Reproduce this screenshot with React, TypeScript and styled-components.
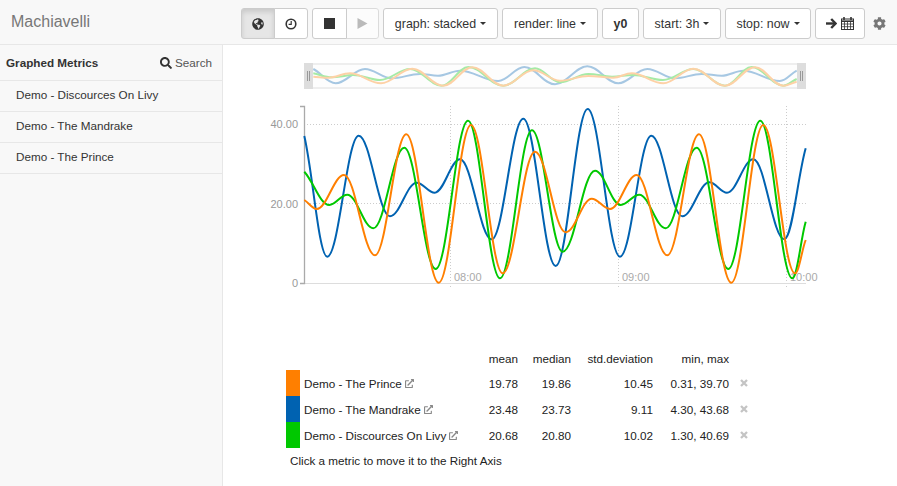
import React from "react";
import styled, { createGlobalStyle } from "styled-components";
import { FaGlobeAmericas, FaCog, FaSearch, FaExternalLinkAlt } from "react-icons/fa";

const Global = createGlobalStyle`
  html, body { margin: 0; padding: 0; background: #fff; }
  body { font-family: "Liberation Sans", Arial, sans-serif; color: #333; overflow: hidden; }
`;

const Page = styled.div`
  width: 897px;
  height: 486px;
  display: flex;
  flex-direction: column;
`;

const Navbar = styled.header`
  height: 45px;
  box-sizing: border-box;
  flex: none;
  background: #f8f8f8;
  border-bottom: 1px solid #e7e7e7;
  display: flex;
  align-items: center;
  padding: 3px 11px 0;
`;

const Brand = styled.div`
  font-size: 16px;
  color: #777;
  width: 230px;
  flex: none;
  margin-top: -3px;
`;

const Toolbar = styled.div`
  display: flex;
  align-items: center;
  gap: 4px;
`;

const Group = styled.div`
  display: flex;
`;

const Btn = styled.button<{ $w: number; $active?: boolean; $off?: boolean; $bold?: boolean }>`
  width: ${(p) => p.$w}px;
  height: 31px;
  padding: 0;
  margin: 0 0 0 -1px;
  &:first-child { margin-left: 0; border-top-left-radius: 3px; border-bottom-left-radius: 3px; }
  &:last-child { border-top-right-radius: 3px; border-bottom-right-radius: 3px; }
  box-sizing: border-box;
  border: 1px solid #ccc;
  border-radius: 0;
  background: ${(p) => (p.$active ? "#e6e6e6" : "#fff")};
  box-shadow: ${(p) => (p.$active ? "inset 0 3px 5px rgba(0,0,0,.125)" : "none")};
  color: #333;
  font-family: inherit;
  font-size: 12.4px;
  font-weight: ${(p) => (p.$bold ? 700 : 400)};
  opacity: ${(p) => (p.$off ? 0.65 : 1)};
  display: flex;
  align-items: center;
  justify-content: center;
  gap: 4px;
`;

const Caret = styled.span`
  width: 0;
  height: 0;
  border-top: 3.5px solid #333;
  border-left: 3.5px solid transparent;
  border-right: 3.5px solid transparent;
`;

const GearWrap = styled.span`
  display: flex;
  margin-left: 4px;
  color: #777;
  font-size: 13px;
`;

const Body = styled.div`
  flex: 1;
  display: flex;
  min-height: 0;
`;

const Sidebar = styled.aside`
  width: 223px;
  flex: none;
  box-sizing: border-box;
  background: #f8f8f8;
  border-right: 1px solid #e7e7e7;
  font-size: 11.7px;
`;

const SideHead = styled.div`
  height: 36px;
  box-sizing: border-box;
  padding: 0 10px 0 6px;
  display: flex;
  align-items: center;
  justify-content: space-between;
  border-bottom: 1px solid #e7e7e7;
`;

const SideTitle = styled.b`
  font-weight: 700;
`;

const SearchLink = styled.span`
  display: flex;
  align-items: center;
  gap: 3px;
  color: #555;
  svg { color: #333; font-size: 12px; }
`;

const SideRow = styled.div`
  height: 31px;
  box-sizing: border-box;
  padding: 0 0 4px 16px;
  display: flex;
  align-items: center;
  border-bottom: 1px solid #e7e7e7;
`;

const Main = styled.main`
  flex: 1;
  min-width: 0;
  display: flex;
  flex-direction: column;
  padding-left: 47px;
`;

const GraphSvg = styled.svg`
  display: block;
  width: 570px;
  height: 255px;
  margin-top: 10px;
  flex: none;
`;

const Legend = styled.table`
  border-collapse: collapse;
  margin: 36px 0 0 16px;
  font-size: 11.7px;
  color: #222;
  table-layout: fixed;
  width: 472px;
  th { font-weight: 400; text-align: right; height: 24px; padding: 0; }
  td { height: 26px; padding: 0; text-align: right; }
`;

const Swatch = styled.td<{ $c: string }>`
  && { width: 14px; background: ${(p) => p.$c}; }
`;

const NameCell = styled.td`
  && { text-align: left; padding-left: 4px; }
  svg { color: #888; font-size: 9px; margin-left: 3px; }
`;

const XCell = styled.td`
  && { text-align: center; }
  svg { vertical-align: 1px; }
`;

const Hint = styled.div`
  font-size: 11.7px;
  color: #222;
  margin: 6px 0 0 20px;
`;

type P = [number, number];
const ox = 270;
const oy = 55;

function smooth(pts: P[]): string {
  const q = pts.map(([x, y]) => [x - ox, y - oy] as P);
  let d = `M${q[0][0]} ${q[0][1]}`;
  for (let i = 1; i < q.length; i++) {
    const [a, b] = q[i - 1];
    const [c, e] = q[i];
    const k = (c - a) * 0.37;
    const sharpStart = i === 1;
    const sharpEnd = i === q.length - 1;
    const y1 = sharpStart ? b + (e - b) * 0.3 : b;
    const y2 = sharpEnd ? e - (e - b) * 0.3 : e;
    d += ` C${(a + k).toFixed(1)} ${y1.toFixed(1)} ${(c - k).toFixed(1)} ${y2.toFixed(1)} ${c} ${e}`;
  }
  return d;
}

const ORANGE = "#ff7f00";
const BLUE = "#0062b1";
const GREEN = "#00c800";

const blue: P[] = [[304.3,136],[327.3,256.7],[358.7,135.7],[390,216.3],[416.7,182.7],[434.7,192.7],[460,159.3],[491.7,239.3],[523.3,118.7],[555.7,266],[587.7,109],[620,256.7],[651.3,135.7],[682.3,216.3],[709.3,182.3],[727,192.7],[753.3,159.3],[784.3,239.3],[805.7,148.3]];
const green: P[] = [[304.3,171.7],[329.3,205],[347.3,194.7],[373.3,228.3],[404.3,147.7],[435.7,269],[468,120.7],[500,278.3],[532,130.3],[562.7,251.7],[595,170.7],[620.7,205],[639.3,194.7],[665.7,228.3],[696.7,147.7],[728.3,269],[760.3,120.7],[792.3,278.3],[805.7,221.7]];
const orange: P[] = [[304.3,200],[316.7,209],[344,175],[375,255.3],[406.3,134.3],[438.7,282.7],[471,125],[502.7,273.3],[535,151.7],[565.7,232.3],[591.7,198.7],[610,209],[636.7,175],[667.3,255.3],[699,134.3],[731.3,282.7],[763.3,125],[795,273.3],[805.7,240]];

const miniBlue: P[] = [[313.3,69],[335.7,83.3],[365,69],[391.7,78.3],[420,74],[438,75.7],[460,70.7],[498.3,81],[524.3,67],[555,84.3],[587.3,66.3],[618.3,83.3],[647.3,69],[675,78.3],[701.7,74],[721.7,75.7],[743.3,70.7],[780,81],[796.7,70.7]];
const miniGreen: P[] = [[313.3,73.3],[331.7,77.3],[353.3,75],[380,80],[410,69],[441.7,85.7],[468.3,67],[503.3,85.7],[535,68.3],[560,82.3],[588.3,74],[612,76.7],[633,75],[663,80],[693.3,69],[725,85.7],[751.7,67],[783.3,85.7],[796.7,79]];
const miniOrange: P[] = [[313.3,76.7],[328.3,77.7],[350,73.3],[381,83.3],[412.3,68.7],[443.3,85.7],[472.3,67.3],[503.3,85.7],[533.3,70.3],[560,80.7],[588.3,76],[613.3,77.7],[631.7,73.3],[663.3,83.3],[693.3,68.7],[725,85.7],[755,67.3],[783.3,85.7],[796.7,81.7]];

const rows = [
  { name: "Demo - The Prince", c: ORANGE, v: ["19.78", "19.86", "10.45", "0.31, 39.70"] },
  { name: "Demo - The Mandrake", c: BLUE, v: ["23.48", "23.73", "9.11", "4.30, 43.68"] },
  { name: "Demo - Discources On Livy", c: GREEN, v: ["20.68", "20.80", "10.02", "1.30, 40.69"] },
];

const X = (x: number) => x - ox;
const Y = (y: number) => y - oy;

function ClockIcon() {
  return (
    <svg width="12" height="12" viewBox="0 0 12 12" fill="none" stroke="#333">
      <circle cx="6" cy="6" r="4.8" strokeWidth="1.6" />
      <path d="M6.2 3V6.3H3.6" strokeWidth="1.2" />
    </svg>
  );
}

function ArrowIcon() {
  return (
    <svg width="11" height="11" viewBox="0 0 11 11" fill="none" stroke="#333">
      <path d="M0 5.5H9" strokeWidth="2.4" />
      <path d="M5.2 1L9.6 5.5L5.2 10" strokeWidth="2.4" />
    </svg>
  );
}

function CalendarIcon() {
  return (
    <svg width="13" height="13" viewBox="0 0 13 13" fill="none" stroke="#333">
      <rect x="0.5" y="2" width="12" height="10.5" strokeWidth="1" />
      <path d="M0.5 4.2H12.5" strokeWidth="1.6" />
      <path d="M0.5 7H12.5M0.5 9.7H12.5M3.5 4.5V12.5M6.5 4.5V12.5M9.5 4.5V12.5" strokeWidth="0.8" />
      <path d="M3 0V3M10 0V3" strokeWidth="1.6" />
    </svg>
  );
}

function RemoveIcon() {
  return (
    <svg width="8" height="8" viewBox="0 0 8 8" fill="none" stroke="#c4c4c4">
      <path d="M1 1L7 7M7 1L1 7" strokeWidth="2.3" />
    </svg>
  );
}

function Graph() {
  const grid = { stroke: "#ccc", strokeDasharray: "1 2", strokeWidth: 1 };
  const label = { fontSize: 11, fill: "#999", fontFamily: "'Liberation Sans', Arial, sans-serif" };
  return (
    <GraphSvg viewBox="0 0 570 255">
      <defs>
        <filter id="soft" x="-2%" y="-10%" width="104%" height="120%">
          <feGaussianBlur stdDeviation="0.4" />
        </filter>
      </defs>
      {/* overview */}
      <rect x={X(305)} y={Y(64)} width={500} height={24} fill="#fdfdfd" />
      <rect x={X(305)} y={Y(63)} width={500} height={2} fill="#eee" />
      <rect x={X(305)} y={Y(87)} width={500} height={2} fill="#eee" />
      <g fill="none" strokeWidth={2} opacity={0.34} filter="url(#soft)">
        <path d={smooth(miniBlue)} stroke={BLUE} />
        <path d={smooth(miniGreen)} stroke={GREEN} />
        <path d={smooth(miniOrange)} stroke={ORANGE} />
      </g>
      <rect x={X(304)} y={Y(63)} width={9} height={26} fill="#ddd" />
      <rect x={X(797)} y={Y(63)} width={9} height={26} fill="#ddd" />
      <path d={`M${X(307.5)} ${Y(71)}V${Y(81)}M${X(309.5)} ${Y(71)}V${Y(81)}M${X(800.5)} ${Y(71)}V${Y(81)}M${X(802.5)} ${Y(71)}V${Y(81)}`} stroke="#999" strokeWidth={1} />

      {/* grid */}
      <path d={`M${X(304)} ${Y(124.5)}H${X(806)}M${X(304)} ${Y(203.5)}H${X(806)}`} fill="none" {...grid} />
      <path d={`M${X(450.5)} ${Y(106)}V${Y(288)}M${X(618.5)} ${Y(106)}V${Y(288)}M${X(786.5)} ${Y(106)}V${Y(288)}`} fill="none" {...grid} />

      {/* axes */}
      <path d={`M${X(304)} ${Y(283.5)}H${X(806)}`} fill="none" stroke="#ddd" strokeWidth={1} />
      <path d={`M${X(300)} ${Y(106.5)}H${X(304.5)}V${Y(283.5)}H${X(300)}`} fill="none" stroke="#aaa" strokeWidth={1.3} />

      {/* labels */}
      <text x={X(298)} y={Y(128)} textAnchor="end" {...label}>40.00</text>
      <text x={X(298)} y={Y(208)} textAnchor="end" {...label}>20.00</text>
      <text x={X(298)} y={Y(287)} textAnchor="end" {...label}>0</text>
      <text x={X(454)} y={Y(281)} {...label} fill="#aaa">08:00</text>
      <text x={X(622)} y={Y(281)} {...label} fill="#aaa">09:00</text>
      <text x={X(790)} y={Y(281)} {...label} fill="#aaa">10:00</text>

      {/* series */}
      <g fill="none" strokeWidth={2}>
        <path d={smooth(blue)} stroke={BLUE} />
        <path d={smooth(green)} stroke={GREEN} />
        <path d={smooth(orange)} stroke={ORANGE} />
      </g>
    </GraphSvg>
  );
}

export default function App() {
  return (
    <Page>
      <Global />
      <Navbar>
        <Brand>Machiavelli</Brand>
        <Toolbar>
          <Group>
            <Btn $w={34} $active><FaGlobeAmericas size={12} /></Btn>
            <Btn $w={34}><ClockIcon /></Btn>
          </Group>
          <Group>
            <Btn $w={35}>
              <svg width="11" height="11" viewBox="0 0 11 11"><rect width="11" height="11" fill="#333" /></svg>
            </Btn>
            <Btn $w={33} $off>
              <svg width="11" height="11" viewBox="0 0 11 11"><path d="M0.5 0L10.5 5.5L0.5 11Z" fill="#999" /></svg>
            </Btn>
          </Group>
          <Group><Btn $w={115}>graph: stacked <Caret /></Btn></Group>
          <Group><Btn $w={96}>render: line <Caret /></Btn></Group>
          <Group><Btn $w={37} $bold>y0</Btn></Group>
          <Group><Btn $w={78}>start: 3h <Caret /></Btn></Group>
          <Group><Btn $w={86}>stop: now <Caret /></Btn></Group>
          <Group><Btn $w={50}><ArrowIcon /><CalendarIcon /></Btn></Group>
          <GearWrap><FaCog /></GearWrap>
        </Toolbar>
      </Navbar>
      <Body>
        <Sidebar>
          <SideHead>
            <SideTitle>Graphed Metrics</SideTitle>
            <SearchLink><FaSearch /> Search</SearchLink>
          </SideHead>
          <SideRow>Demo - Discources On Livy</SideRow>
          <SideRow>Demo - The Mandrake</SideRow>
          <SideRow>Demo - The Prince</SideRow>
        </Sidebar>
        <Main>
          <Graph />
          <Legend>
            <colgroup>
              <col style={{ width: 14 }} />
              <col style={{ width: 173 }} />
              <col style={{ width: 45 }} />
              <col style={{ width: 53 }} />
              <col style={{ width: 82 }} />
              <col style={{ width: 76 }} />
              <col style={{ width: 29 }} />
            </colgroup>
            <thead>
              <tr>
                <th /><th /><th>mean</th><th>median</th><th>std.deviation</th><th>min, max</th><th />
              </tr>
            </thead>
            <tbody>
              {rows.map((r) => (
                <tr key={r.name}>
                  <Swatch $c={r.c} />
                  <NameCell>{r.name}<FaExternalLinkAlt /></NameCell>
                  {r.v.map((v) => <td key={v}>{v}</td>)}
                  <XCell><RemoveIcon /></XCell>
                </tr>
              ))}
            </tbody>
          </Legend>
          <Hint>Click a metric to move it to the Right Axis</Hint>
        </Main>
      </Body>
    </Page>
  );
}
